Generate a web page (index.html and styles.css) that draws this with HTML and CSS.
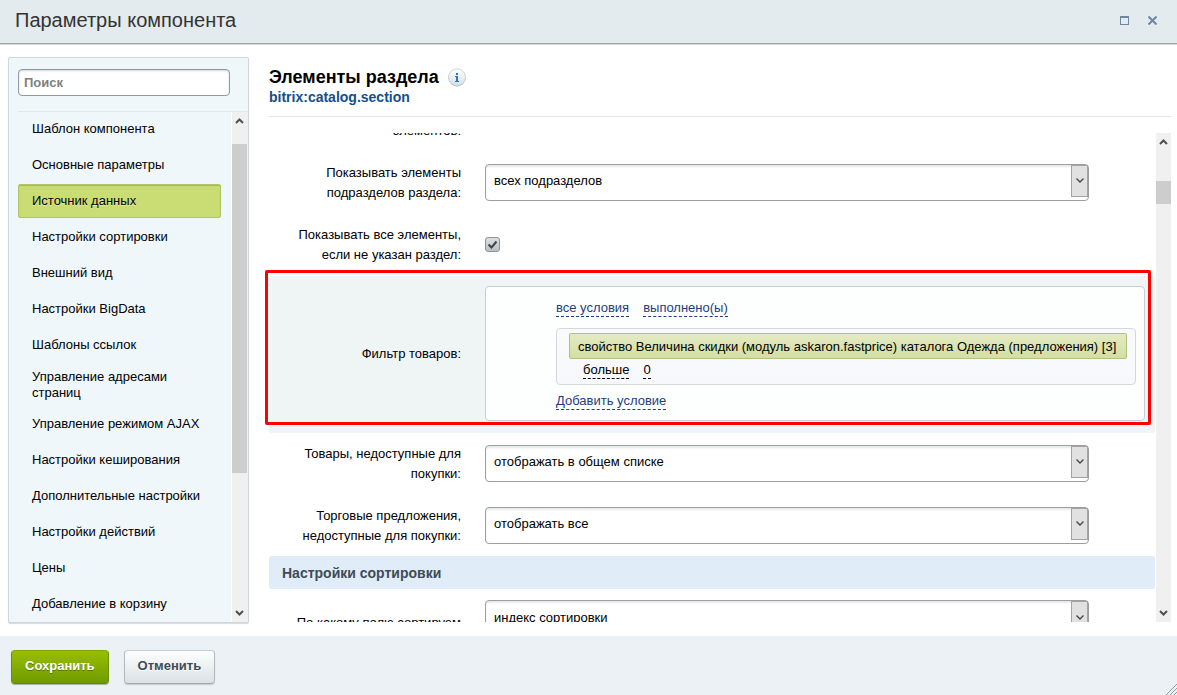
FILE: index.html
```html
<!DOCTYPE html>
<html lang="ru">
<head>
<meta charset="utf-8">
<title>Параметры компонента</title>
<link rel="stylesheet" href="styles.css">
</head>
<body>
<div class="dialog">
  <header class="titlebar">
    <h1 class="titlebar-text">Параметры компонента</h1>
    <div class="titlebar-tools">
      <button class="tool" type="button" aria-label="Развернуть"><svg width="9" height="9" viewBox="0 0 9 9" shape-rendering="crispEdges"><path d="M0 0h9v9H0zM1 2v6h7V2z" fill="#6f87a5" fill-rule="evenodd"/></svg></button>
      <button class="tool" type="button" aria-label="Закрыть"><svg width="9" height="9" viewBox="0 0 9 9"><path d="M.5.500l8 8M8.500.500l-8 8" stroke="#6f87a5" stroke-width="2"/></svg></button>
    </div>
  </header>

  <div class="workspace">
    <aside class="sidebar">
      <div class="search"><input class="search-input" type="text" placeholder="Поиск" aria-label="Поиск"></div>
      <div class="side-body">
        <nav class="menu">
          <a class="menu-item" href="#">Шаблон компонента</a>
          <a class="menu-item" href="#">Основные параметры</a>
          <a class="menu-item active" href="#">Источник данных</a>
          <a class="menu-item" href="#">Настройки сортировки</a>
          <a class="menu-item" href="#">Внешний вид</a>
          <a class="menu-item" href="#">Настройки BigData</a>
          <a class="menu-item" href="#">Шаблоны ссылок</a>
          <a class="menu-item two-line" href="#">Управление адресами<br>страниц</a>
          <a class="menu-item" href="#">Управление режимом AJAX</a>
          <a class="menu-item" href="#">Настройки кеширования</a>
          <a class="menu-item" href="#">Дополнительные настройки</a>
          <a class="menu-item" href="#">Настройки действий</a>
          <a class="menu-item" href="#">Цены</a>
          <a class="menu-item" href="#">Добавление в корзину</a>
        </nav>
        <div class="scrollbar side-scroll">
          <svg class="scroll-arrow" width="9" height="6" viewBox="0 0 9 6"><path d="M1 5l3.500-3.500L8 5" fill="none" stroke="#505050" stroke-width="2"/></svg>
          <div class="scroll-thumb"></div>
          <svg class="scroll-arrow" width="9" height="6" viewBox="0 0 9 6"><path d="M1 1l3.500 3.500L8 1" fill="none" stroke="#505050" stroke-width="2"/></svg>
        </div>
      </div>
    </aside>

    <main class="content">
      <div class="content-head">
        <div class="head-line">
          <h2 class="head-title">Элементы раздела</h2>
          <svg class="info" width="19" height="19" viewBox="0 0 19 19">
            <defs><linearGradient id="ig" x1="0" y1="0" x2="0" y2="1"><stop offset="0" stop-color="#fff"/><stop offset="1" stop-color="#d5dfe4"/></linearGradient></defs>
            <circle cx="9" cy="10" r="8.500" fill="#a9b2b8"/>
            <circle cx="9" cy="9.300" r="8.500" fill="url(#ig)" stroke="#c3ccd1" stroke-width=".8"/>
            <path d="M8 5h2v2H8zM7 8h3v5h1v1H7v-1h1V9H7z" fill="#2f74bd"/>
          </svg>
        </div>
        <div class="head-sub">bitrix:catalog.section</div>
      </div>

      <div class="pane">
        <form class="params">
          <div class="row row-first"><span class="label">элементов:</span></div>
          <div class="row">
            <label class="label" for="sub">Показывать элементы<br>подразделов раздела:</label>
            <div class="select-box"><select class="select" id="sub"><option>всех подразделов</option></select><span class="drop"><svg width="8" height="5" viewBox="0 0 8 5"><path d="M.5.500L4 4 7.500.500" fill="none" stroke="#444" stroke-width="1.300"/></svg></span></div>
          </div>
          <div class="row">
            <label class="label" for="all">Показывать все элементы,<br>если не указан раздел:</label>
            <input class="check" id="all" type="checkbox" checked>
          </div>
          <div class="row row-filter">
            <span class="label">Фильтр товаров:</span>
            <div class="filter">
              <div class="terms"><a class="term" href="#">все условия</a><a class="term" href="#">выполнено(ы)</a></div>
              <div class="condition">
                <div class="property">свойство Величина скидки (модуль askaron.fastprice) каталога Одежда (предложения) [3]</div>
                <div class="terms values"><a class="term dark" href="#">больше</a><a class="term dark" href="#">0</a></div>
              </div>
              <div class="terms"><a class="term" href="#">Добавить условие</a></div>
            </div>
            <div class="highlight"></div>
          </div>
          <div class="row">
            <label class="label" for="goods">Товары, недоступные для<br>покупки:</label>
            <div class="select-box"><select class="select" id="goods"><option>отображать в общем списке</option></select><span class="drop"><svg width="8" height="5" viewBox="0 0 8 5"><path d="M.5.500L4 4 7.500.500" fill="none" stroke="#444" stroke-width="1.300"/></svg></span></div>
          </div>
          <div class="row">
            <label class="label" for="offers">Торговые предложения,<br>недоступные для покупки:</label>
            <div class="select-box"><select class="select" id="offers"><option>отображать все</option></select><span class="drop"><svg width="8" height="5" viewBox="0 0 8 5"><path d="M.5.500L4 4 7.500.500" fill="none" stroke="#444" stroke-width="1.300"/></svg></span></div>
          </div>
          <h3 class="section">Настройки сортировки</h3>
          <div class="row row-last">
            <label class="label" for="sort">По какому полю сортируем</label>
            <div class="select-box"><select class="select" id="sort"><option>индекс сортировки</option></select><span class="drop"><svg width="8" height="5" viewBox="0 0 8 5"><path d="M.5.500L4 4 7.500.500" fill="none" stroke="#444" stroke-width="1.300"/></svg></span></div>
          </div>
        </form>
        <div class="scrollbar pane-scroll">
          <svg class="scroll-arrow" width="9" height="6" viewBox="0 0 9 6"><path d="M1 5l3.500-3.500L8 5" fill="none" stroke="#505050" stroke-width="2"/></svg>
          <div class="scroll-thumb"></div>
          <svg class="scroll-arrow" width="9" height="6" viewBox="0 0 9 6"><path d="M1 1l3.500 3.500L8 1" fill="none" stroke="#505050" stroke-width="2"/></svg>
        </div>
      </div>
    </main>
  </div>

  <footer class="footer">
    <button class="btn btn-save" type="button">Сохранить</button>
    <button class="btn btn-cancel" type="button">Отменить</button>
    <svg class="grip" width="11" height="11" viewBox="0 0 11 11"><path d="M0 11L11 0M4 11l7-7M8 11l3-3" stroke="#909a9e" stroke-width="1"/></svg>
  </footer>
</div>
</body>
</html>
```
FILE: styles.css
```css
* { box-sizing: border-box; }

body {
  margin: 0;
  font-family: "Liberation Sans", Arial, sans-serif;
  font-size: 13px;
  color: #000;
  background: #fff;
}

.dialog {
  display: flex;
  flex-direction: column;
  height: 100vh;
  overflow: hidden;
}

.titlebar {
  display: flex;
  flex: none;
  align-items: center;
  justify-content: space-between;
  height: 45px;
  padding: 0 20px 4px 15px;
  background: #e3ebee;
  border-bottom: 1px solid #d4d8da;
  box-shadow: inset 0 -1px #a0a4a6;
}

.titlebar-text {
  margin: 0;
  font-size: 20px;
  font-weight: 400;
  line-height: 24px;
  color: #333;
}

.titlebar-tools { display: flex; gap: 19px; }

.tool {
  display: flex;
  padding: 0;
  border: 0;
  background: none;
}

.workspace {
  display: flex;
  flex: 1;
  min-height: 0;
  gap: 16px;
  padding: 12px 6px 13px 8px;
}

.sidebar {
  display: flex;
  flex: none;
  flex-direction: column;
  width: 241px;
  background: #eff7fa;
  border: 1px solid #d0d6d9;
  border-radius: 2px;
  box-shadow: 0 1px 1px #d5dadc;
}

.search {
  flex: none;
  height: 54px;
  margin-left: 9px;
  padding: 11px 18px 0 0;
  border-bottom: 1px solid #dfe8ea;
}

.search-input {
  display: block;
  width: 100%;
  height: 27px;
  padding: 0 5px;
  border: 1px solid #8d99a3;
  border-radius: 4px;
  background: #fff;
  box-shadow: inset 0 1px 2px #cfd6da;
  font: bold 13px "Liberation Sans", Arial, sans-serif;
}

.search-input::placeholder { color: #808080; opacity: 1; }

.side-body {
  display: flex;
  flex: 1;
  min-height: 0;
}

.menu {
  flex: 1;
  overflow: hidden;
  padding: 0 10px 0 9px;
}

.menu-item {
  display: flex;
  align-items: center;
  height: 34px;
  margin-bottom: 2px;
  padding-left: 14px;
  border-radius: 2px;
  line-height: 16px;
  color: #000;
  text-decoration: none;
}

.two-line { height: 41px; }

.active {
  background: #cadd74;
  border: 1px solid #b1c466;
  padding-left: 13px;
  box-shadow: inset 0 1px 1px #a5b95c;
  text-shadow: 0 1px #e0edaa;
}

.scrollbar {
  display: flex;
  flex: none;
  flex-direction: column;
  align-items: center;
  width: 15px;
  background: #f0f0f0;
}

.scroll-thumb { width: 100%; background: #cdcdcd; }
.scroll-arrow { flex: none; }

.side-scroll { padding: 6px 0; margin: 0 1px; box-shadow: -1px 0 #fff, 1px 0 #f0f0f0; }
.side-scroll .scroll-thumb { height: 66%; margin: 20px 0 auto; }
.pane-scroll { padding: 6px 0; margin-left: 1px; }
.pane-scroll .scroll-thumb { height: 23px; margin: 36px 0 auto; }

.content {
  display: flex;
  flex: 1;
  flex-direction: column;
  min-width: 0;
}

.content-head {
  flex: none;
  height: 60px;
  margin-left: 4px;
  padding-top: 9px;
  border-bottom: 1px solid #e0e4e5;
}

.head-line { display: flex; gap: 9px; align-items: center; height: 22px; }

.head-title { margin: 0; font-size: 18px; line-height: 22px; }

.head-sub {
  font-size: 14px;
  font-weight: 700;
  line-height: 18px;
  color: #134f8c;
}

.pane {
  display: flex;
  flex: 1;
  min-height: 0;
  margin: 16px 0 1px;
}

.params {
  flex: 1;
  min-width: 0;
  overflow: hidden;
  padding-left: 4px;
}

.row {
  position: relative;
  display: flex;
  align-items: center;
  height: 62px;
}

.row-first { align-items: flex-end; margin-top: -43px; padding-bottom: 11px; }

.label {
  flex: none;
  width: 192px;
  margin-right: 24px;
  line-height: 20px;
  text-align: right;
}

.select-box {
  position: relative;
  flex: 1;
  max-width: 604px;
  height: 37px;
  margin-bottom: 2px;
}

.select {
  width: 100%;
  height: 37px;
  padding: 0 24px 3px 8px;
  appearance: none;
  border: 1px solid #9b9fa1;
  border-radius: 4px;
  background: #fff;
  box-shadow: inset 0 2px 2px #e5eaea;
  font: 13px "Liberation Sans", Arial, sans-serif;
  color: #000;
}

.drop {
  position: absolute;
  top: 1px;
  right: 1px;
  display: flex;
  align-items: center;
  justify-content: center;
  width: 17px;
  height: 32px;
  border: 1px solid #a3a3a3;
  background: #e1e1e1;
  pointer-events: none;
}

.check {
  width: 15px;
  height: 15px;
  margin: 0 0 2px;
  appearance: none;
  border: 1px solid #8c9499;
  border-radius: 3px;
  background: url("data:image/svg+xml,%3Csvg xmlns='http://www.w3.org/2000/svg' viewBox='0 0 13 13'%3E%3Cpath d='M2.500 6.500l3 3 5-6' fill='none' stroke='%23404448' stroke-width='2'/%3E%3C/svg%3E"), linear-gradient(#dce0e3, #b9c0c5);
}

.row-filter {
  height: 157px;
  padding-bottom: 2px;
  border-radius: 3px;
  background: #eff4f5;
}

.filter {
  flex: 1;
  min-width: 0;
  height: 135px;
  margin-right: 10px;
  padding: 12px 8px 0 70px;
  border: 1px solid #c8cdd5;
  border-radius: 4px;
  background: #fdfefe;
}

.terms { display: flex; gap: 14px; line-height: 17px; }

.term {
  border-bottom: 1px dashed #1d3f80;
  color: #1d3f80;
  text-decoration: none;
}

.dark { border-color: #000; color: #000; }

.condition {
  height: 57px;
  margin: 11px 0 7px;
  padding: 4px 8px 0 12px;
  border: 1px solid #d5d8da;
  border-radius: 4px;
  background: linear-gradient(#fafafc, #f7f8fb);
}

.property {
  height: 26px;
  padding: 0 8px;
  border: 1px solid #b3c080;
  border-radius: 2px;
  background: linear-gradient(#e4ebc4, #d3dfa1);
  line-height: 26px;
  white-space: nowrap;
}

.values { padding: 2px 0 0 14px; }

/* Marker frame drawn over the filter row */
.highlight {
  position: absolute;
  top: -6px;
  right: 4px;
  bottom: 8px;
  left: -4px;
  border: 3px solid #f00;
  border-radius: 2px;
  pointer-events: none;
}

.section {
  height: 33px;
  margin: -1px 0 0;
  padding-left: 13px;
  border-radius: 3px;
  background: #e0ecf8;
  font-size: 14px;
  line-height: 34px;
  color: #3f4b54;
}

.row-last { align-items: flex-start; padding-top: 11px; }
.row-last .label { padding-top: 13px; }

.footer {
  position: relative;
  display: flex;
  flex: none;
  gap: 15px;
  align-items: flex-start;
  height: 59px;
  padding: 14px 11px 0;
  background: #ebf1f4;
}

.btn {
  height: 34px;
  padding: 0 13px 3px;
  border: 1px solid;
  border-radius: 4px;
  font: bold 13px "Liberation Sans", Arial, sans-serif;
}

.btn-save {
  border-color: #7fa800 #6d9300 #5f8400;
  background: linear-gradient(#98be00, #6f9b00);
  box-shadow: 0 1px 1px #aab2a0;
  color: #fff;
  text-shadow: 0 1px #557700;
}

.btn-cancel {
  border-color: #c8ced1 #b3babd #a3abae;
  background: linear-gradient(#fefefe, #d9e2e5);
  box-shadow: 0 1px 1px #c4cacd;
  color: #3f4b54;
  text-shadow: 0 1px #fff;
}

.grip { position: absolute; right: 0; bottom: 0; }
```
